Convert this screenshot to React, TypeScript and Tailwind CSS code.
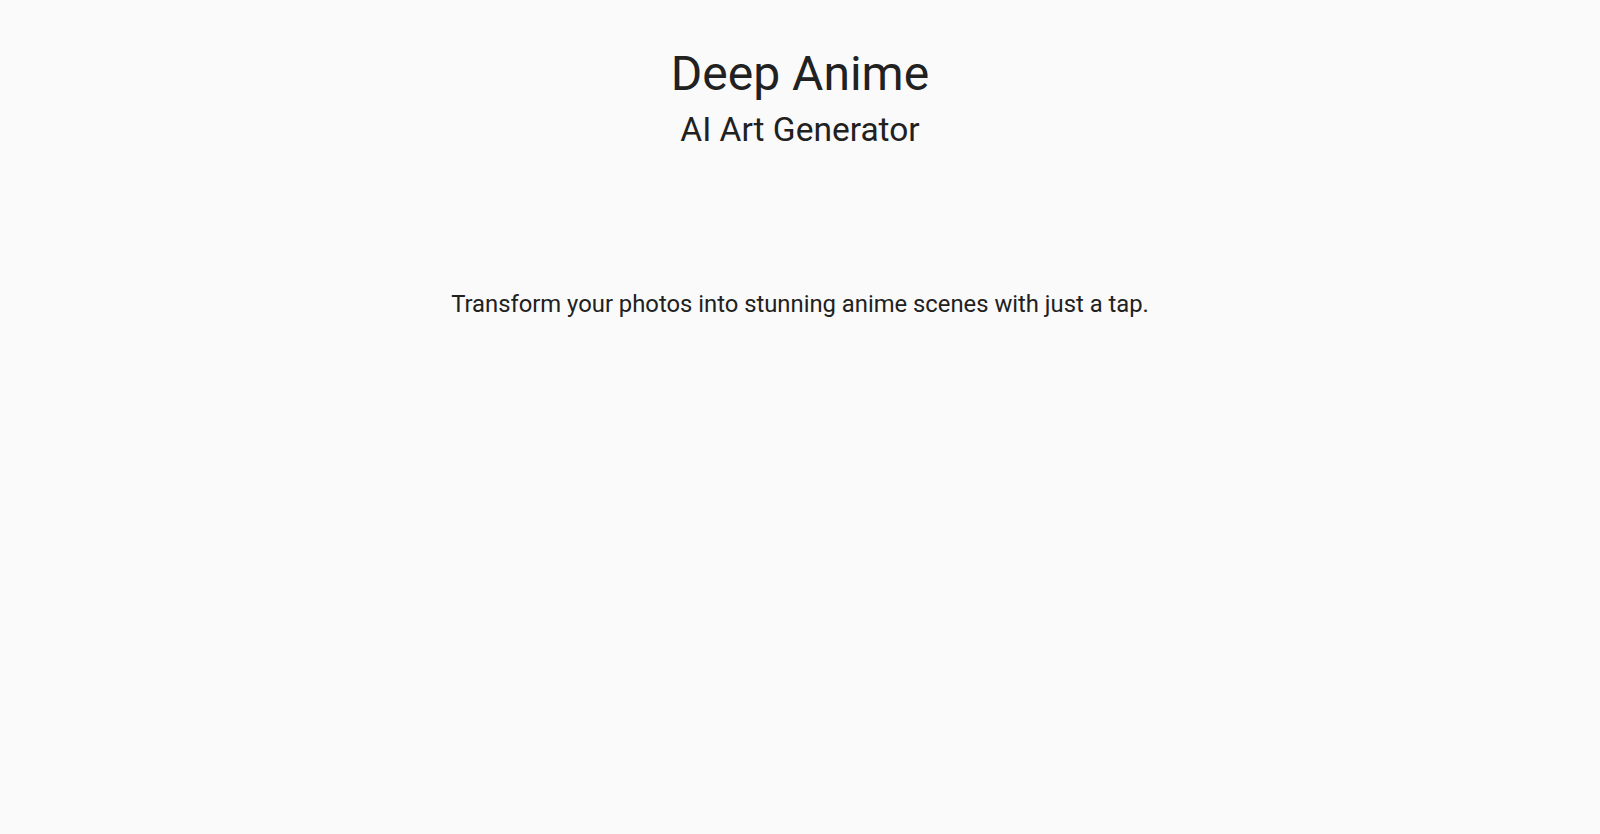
export default function App() {
  return (
    <div className="min-h-screen w-full bg-[#fafafa] text-[#212121] flex flex-col items-center" style={{ fontFamily: 'Roboto, "Noto Sans", sans-serif' }}>
      <h1 className="mt-[44px] text-[48px] leading-[60px] font-normal">Deep Anime</h1>
      <h2 className="mt-[6px] text-[33.5px] leading-[40px] font-normal">AI Art Generator</h2>
      <p className="mt-[138px] text-[23.8px] leading-[32px]">Transform your photos into stunning anime scenes with just a tap.</p>
    </div>
  );
}
